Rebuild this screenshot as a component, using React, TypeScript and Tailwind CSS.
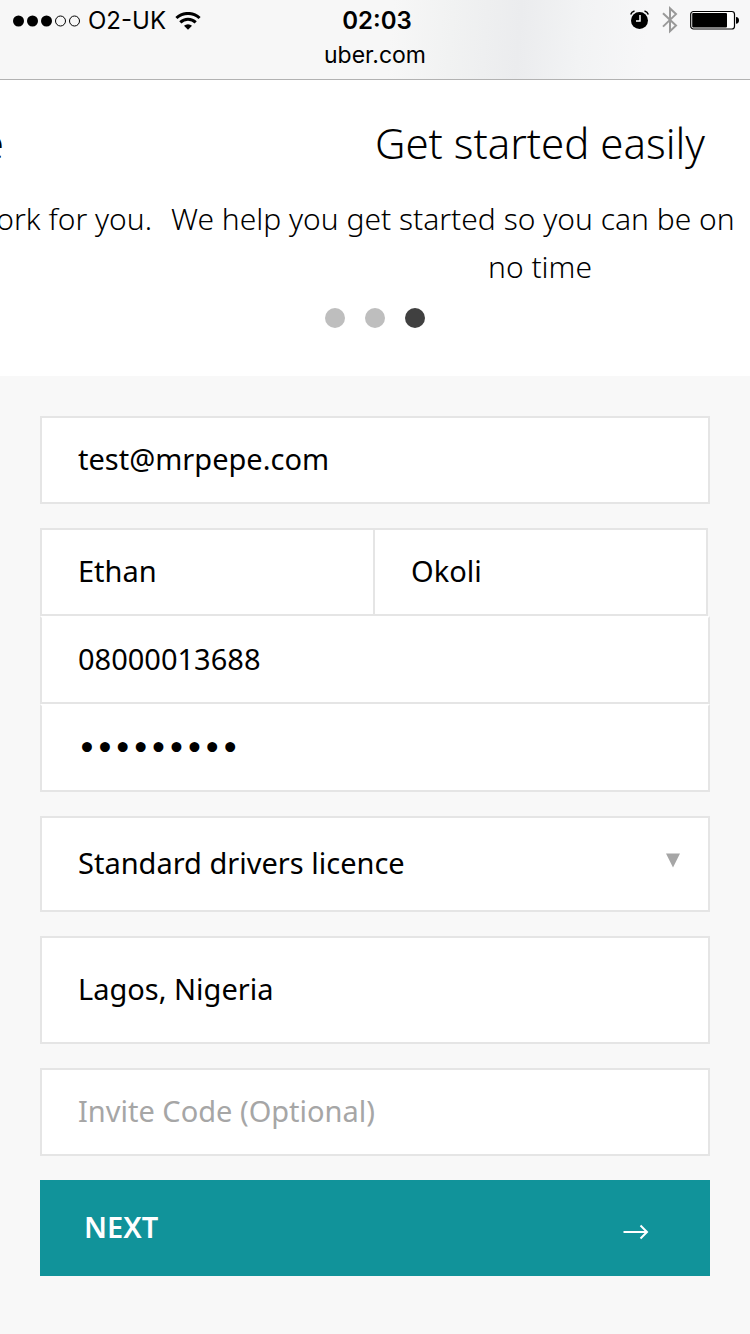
import type { ComponentProps } from 'react';

const TEXT = "font-['Noto_Sans',sans-serif] text-[29px] leading-[40px] text-black pb-[3px]";
const PASSWORD_TEXT = "font-['DejaVu_Sans',sans-serif] font-bold text-[28px] leading-[40px] text-black";
const BOX = 'block w-full rounded-none border-2 border-[#e5e5e5] bg-white px-9 outline-none placeholder:text-[#a6a6a6] placeholder:opacity-100';

type FieldProps = ComponentProps<'input'> & { label: string; id: string };

function Field({ label, id, className = '', type = 'text', ...rest }: FieldProps) {
  return (
    <>
      <label htmlFor={id} className="sr-only">{label}</label>
      <input
        id={id}
        type={type}
        className={`${BOX} ${type === 'password' ? PASSWORD_TEXT : TEXT} ${className}`}
        {...rest}
      />
    </>
  );
}

function SignalDots() {
  return (
    <svg width="68" height="12" viewBox="0 0 68 12" aria-hidden="true">
      <circle cx="6.500" cy="6" r="5.500" />
      <circle cx="20.500" cy="6" r="5.500" />
      <circle cx="34.500" cy="6" r="5.500" />
      <circle cx="48.500" cy="6" r="5" fill="none" stroke="#000" />
      <circle cx="62.500" cy="6" r="5" fill="none" stroke="#000" />
    </svg>
  );
}

function WifiIcon() {
  return (
    <svg width="26" height="18" viewBox="0 0 26 18" fill="none" stroke="#000" strokeWidth="3" aria-hidden="true">
      <path d="M1.400 6a17 17 0 0 1 23.200 0" />
      <path d="M5.300 10.400a11 11 0 0 1 15.400 0" />
      <path d="M9 13.800a6 6 0 0 1 8 0L13 17.800z" fill="#000" stroke="none" />
    </svg>
  );
}

function AlarmIcon() {
  return (
    <svg width="20" height="20" viewBox="0 0 20 20" aria-hidden="true">
      <circle cx="9.500" cy="10.500" r="8.500" />
      <path d="M.7 4.500Q1.500 1.700 4.500 1M18.300 4.500Q17.500 1.700 14.500 1" fill="none" stroke="#000" strokeWidth="1.500" />
      <path d="M10 5v6H6" fill="none" stroke="#fff" strokeWidth="1.500" />
    </svg>
  );
}

function BluetoothIcon() {
  return (
    <svg width="16" height="28" viewBox="0 0 16 28" fill="none" stroke="#999" strokeWidth="2" aria-hidden="true">
      <path d="M1 7.200 14 19.500 8 25.200V2.400l6 5.700L1 20.600" />
    </svg>
  );
}

function BatteryIcon() {
  return (
    <svg width="50" height="20" viewBox="0 0 50 20" aria-hidden="true">
      <rect x=".7" y="1.500" width="43.800" height="17.500" rx="2.800" fill="#fff" stroke="#000" strokeWidth="1.200" />
      <rect x="2.200" y="3" width="34.800" height="14.500" rx="1" />
      <path d="M46 7q3 .4 3 3.400T46 13.800z" />
    </svg>
  );
}

export default function App() {
  return (
    <div className="min-h-screen overflow-x-hidden bg-[#f8f8f8]">
      <header className="h-20 border-b border-[#b2b2b2] bg-[linear-gradient(95deg,#f7f7f7_52%,#f1f2f2_60%,#ebecee_69%,#f2f3f4_77%,#f7f7f8_86%)] pt-px font-['Inter',sans-serif] text-black">
        <div className="grid h-10 grid-cols-[1fr_auto_1fr] items-center pr-[10px] pl-3 text-[24px] leading-7">
          <div className="flex items-center gap-2">
            <SignalDots />
            <span>O2-UK</span>
            <span className="ml-px pb-px"><WifiIcon /></span>
          </div>
          <time className="ml-[2px] font-semibold">02:03</time>
          <div className="flex items-center justify-end gap-3 pb-[2px]">
            <AlarmIcon />
            <BluetoothIcon />
            <BatteryIcon />
          </div>
        </div>
        <p className="text-center text-[23px] leading-7">uber.com</p>
      </header>

      <section aria-label="Why drive" className="h-[296px] overflow-hidden bg-white font-['Noto_Sans',sans-serif] font-light text-black">
        <div className="flex gap-[19px] pt-[31px]">
          <article className="flex w-[152px] shrink-0 flex-col items-end">
            <h2 className="mb-5 flex w-full text-[42px] leading-[64px]">
              <span className="flex w-1 justify-end overflow-hidden">e</span>
            </h2>
            <p className="text-[30px] leading-[48px] whitespace-nowrap">work for you.</p>
          </article>
          <article className="w-[738px] shrink-0 text-center">
            <h2 className="mb-5 text-[42px] leading-[64px]">Get started easily</h2>
            <p className="text-[30px] leading-[48px]">
              <span className="block text-left">We help you get started so you can be on</span>
              no time
            </p>
          </article>
        </div>
        <div className="mt-[17px] flex justify-center gap-5">
          <button type="button" aria-label="Slide 1" className="size-5 rounded-full bg-[#bebebe]" />
          <button type="button" aria-label="Slide 2" className="size-5 rounded-full bg-[#bebebe]" />
          <button type="button" aria-label="Slide 3" className="size-5 rounded-full bg-[#404040]" />
        </div>
      </section>

      <form className="flex flex-col gap-6 px-10 pt-10 pb-14" onSubmit={(e) => e.preventDefault()}>
        <div><Field id="email" label="Email" type="email" defaultValue="test@mrpepe.com" className="h-22" /></div>
        <div>
          <div className="mr-[2px] grid grid-cols-2">
            <div><Field id="first" label="First name" defaultValue="Ethan" className="h-22 border-r-0" /></div>
            <div className="-ml-px"><Field id="last" label="Last name" defaultValue="Okoli" className="h-22" /></div>
          </div>
          <Field id="phone" label="Phone" type="tel" defaultValue="08000013688" className="h-22 border-t-white" />
          <Field id="password" label="Password" type="password" defaultValue="driver123" className="h-22 border-t-white" />
        </div>
        <div className="relative">
          <label htmlFor="licence" className="sr-only">Licence type</label>
          <select id="licence" className={`${BOX} ${TEXT} h-24 appearance-none`}>
            <option>Standard drivers licence</option>
          </select>
          <svg className="pointer-events-none absolute top-[37px] right-[30px]" width="14" height="15" viewBox="0 0 14 15" fill="#a6a6a6" aria-hidden="true">
            <path d="M0 .5h14L7 14.500z" />
          </svg>
        </div>
        <div><Field id="city" label="City" defaultValue="Lagos, Nigeria" className="h-27" /></div>
        <div><Field id="invite" label="Invite code" placeholder="Invite Code (Optional)" className="h-22" /></div>
        <button type="submit" className="flex h-24 items-center justify-between bg-[#11939a] pr-[60px] pb-[2px] pl-11 font-['Noto_Sans',sans-serif] text-[29px] leading-[40px] font-semibold text-white">
          NEXT
          <svg className="mt-[10px]" width="28" height="16" viewBox="0 0 28 16" fill="none" stroke="#fff" strokeWidth="2" aria-hidden="true">
            <path d="M1.500 8H25M18.500 1.500 25 8l-6.500 6.500" />
          </svg>
        </button>
      </form>
    </div>
  );
}
